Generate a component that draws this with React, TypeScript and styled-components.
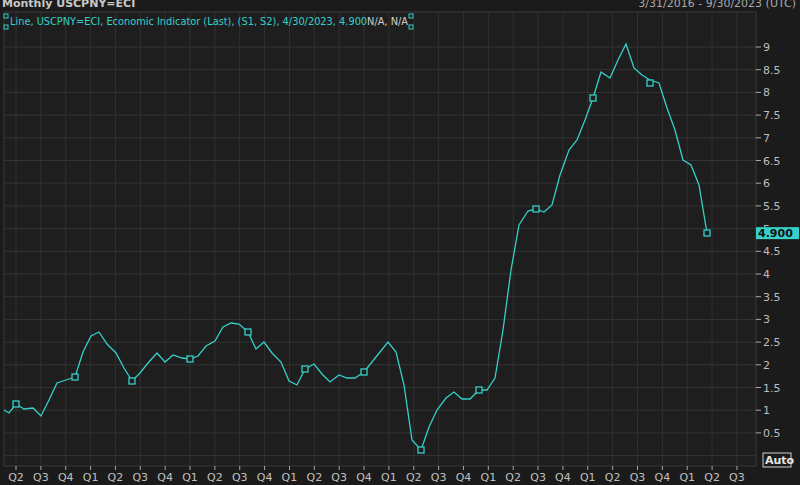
import React from "react";
import styled, { createGlobalStyle } from "styled-components";

const Global = createGlobalStyle`
  html, body { margin: 0; padding: 0; background: #1b1b1b; overflow: hidden; }
  body { font-family: "DejaVu Sans", "Liberation Sans", sans-serif; }
`;

const Page = styled.div`
  width: 800px; height: 485px; background: #1b1b1b; display: flex; flex-direction: column; overflow: hidden;
`;
const Header = styled.div`
  height: 11px; display: flex; justify-content: space-between; align-items: flex-end;
  color: #c8c8c8; font-size: 11px; line-height: 11px; padding: 0 4px 0 2px; overflow: hidden;
`;
const Title = styled.span` font-weight: bold; transform: translateY(-2px); `;
const Range = styled.span` color: #a9a9a9; transform: translateY(-2px); `;
const Chart = styled.svg` display: block; `;

const pts = "4,410 9,413 16,404 24,409 33,408 41,416 49,400 57,383 66,380 75,377 83,352 91,336 99,332 107,344 116,353 124,368 132,381 140,373 148,363 157,353 165,362 173,355 182,358 190,359 198,356 206,346 215,341 223,327 231,323 239,324 248,332 256,349 264,342 272,353 281,362 289,381 297,385 305,369 314,364 322,374 330,382 339,375 347,378 355,378 364,372 372,362 380,352 388,342 396,352 404,385 412,440 421,450 429,427 437,410 446,398 454,392 462,399 470,399 479,390 487,390 495,378 503,330 511,270 519,225 528,211 536,209 544,212 552,205 560,175 569,150 577,140 585,120 593,98 601,72 610,78 618,60 626,44 634,68 642,75 650,80 659,83 667,108 675,130 683,160 691,165 699,185 707,233";
const markers = [[16,404],[75,377],[132,381],[190,359],[248,332],[305,369],[364,372],[421,450],[479,390],[536,209],[593,98],[650,83],[707,233]];
const OY = 11;
const yv = (v: number) => 47 + (9 - v) * 45.4 - OY;
const vals: number[] = [];
for (let v = 0.5; v <= 9.01; v += 0.5) vals.push(Math.round(v * 10) / 10);
const qs = ["Q2", "Q3", "Q4", "Q1"];
const qx = Array.from({ length: 30 }, (_, i) => 16 + i * 24.86);
const cyan = "#35d0c8";

export default function App() {
  const shifted = pts.split(" ").map(p => { const [x, y] = p.split(",").map(Number); return `${x},${y - OY}`; }).join(" ");
  return (
    <Page>
      <Global />
      <Header><Title>Monthly USCPNY=ECI</Title><Range>3/31/2016 - 9/30/2023 (UTC)</Range></Header>
      <Chart width={800} height={474} viewBox="0 0 800 474">
        <rect x={4} y={1} width={752} height={454} fill="#1e1e1e" stroke="#3a3a3a" />
        {vals.map(v => <line key={v} x1={4} x2={756} y1={yv(v)} y2={yv(v)} stroke="#343434" />)}
        <line x1={4} x2={756} y1={yv(0.5) + 22.7} y2={yv(0.5) + 22.7} stroke="#343434" />
        {qx.map((x, i) => <line key={i} x1={x} x2={x} y1={1} y2={455} stroke="#303030" />)}
        {vals.map(v => (
          <g key={"l" + v}>
            <line x1={756} x2={761} y1={yv(v)} y2={yv(v)} stroke="#aaa" />
            <text x={763} y={yv(v) + 4} fill="#bdbdbd" fontSize={11} fontFamily="DejaVu Sans, sans-serif">{v}</text>
          </g>
        ))}
        {qx.map((x, i) => (
          <g key={"q" + i}>
            <line x1={x} x2={x} y1={455} y2={459} stroke="#aaa" />
            <text x={x} y={470} fill="#c0c0c0" fontSize={11} textAnchor="middle" fontFamily="DejaVu Sans, sans-serif">{qs[i % 4]}</text>
          </g>
        ))}
        <polyline points={shifted} fill="none" stroke={cyan} strokeWidth={1.3} />
        {markers.map(([x, y], i) => <rect key={i} x={x - 3} y={y - OY - 3} width={6} height={6} fill="#1e1e1e" stroke={cyan} strokeWidth={1.3} />)}
        <rect x={756} y={yv(4.9) - 6} width={43} height={12} fill={cyan} />
        <text x={758} y={yv(4.9) + 4} fill="#111" fontSize={11} fontWeight="bold" fontFamily="DejaVu Sans, sans-serif">4.900</text>
        <rect x={763} y={442} width={28} height={14} fill="none" stroke="#cfcfcf" />
        <text x={765} y={453} fill="#e6e6e6" fontSize={11} fontWeight="bold" fontFamily="DejaVu Sans, sans-serif">Auto</text>
        <rect x={4} y={3} width={4} height={4} fill="none" stroke={cyan} />
        <rect x={4} y={14} width={4} height={4} fill="none" stroke={cyan} />
        <rect x={409} y={3} width={4} height={4} fill="none" stroke={cyan} />
        <rect x={409} y={14} width={4} height={4} fill="none" stroke={cyan} />
        <text x={10} y={14} fontSize={11} fontFamily="DejaVu Sans, sans-serif" textLength={398} lengthAdjust="spacingAndGlyphs">
          <tspan fill={cyan}>Line, USCPNY=ECI, Economic Indicator (Last), (S1, S2), 4/30/2023, 4.900</tspan><tspan fill="#d0d0d0">N/A, N/A</tspan>
        </text>
      </Chart>
    </Page>
  );
}
